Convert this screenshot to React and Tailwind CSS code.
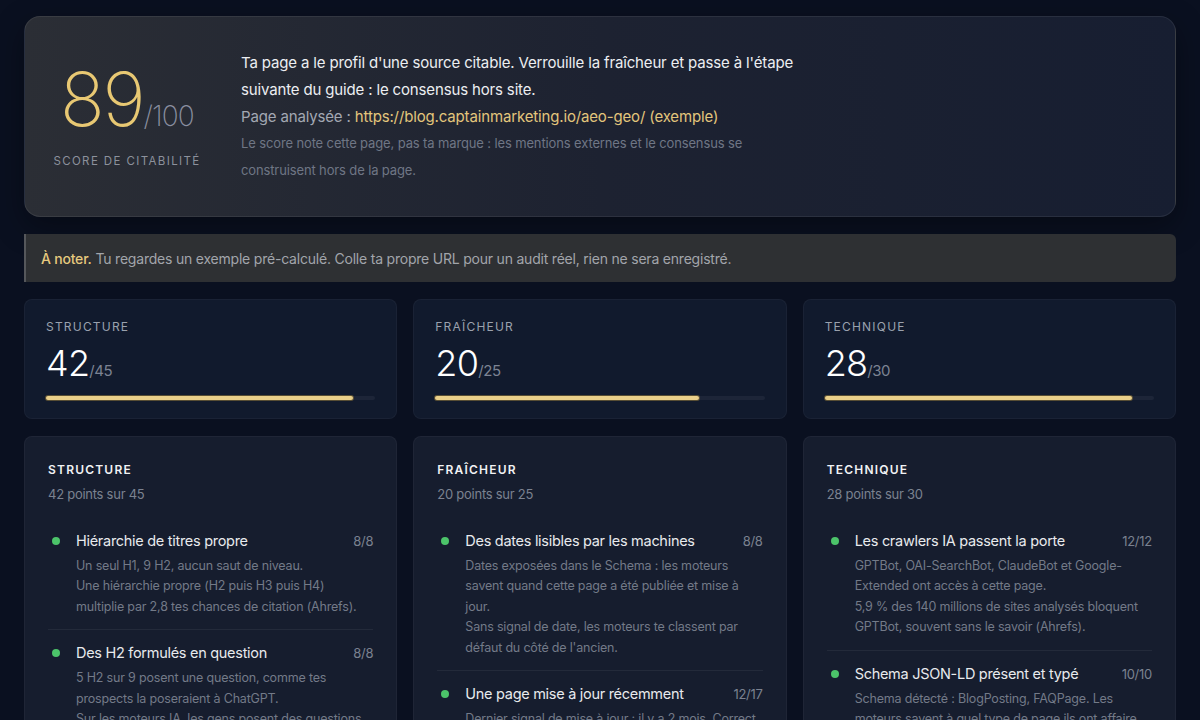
const stats = [
  { label: "STRUCTURE", score: 42, max: 45 },
  { label: "FRAÎCHEUR", score: 20, max: 25 },
  { label: "TECHNIQUE", score: 28, max: 30 },
];

const details = [
  {
    title: "STRUCTURE",
    sub: "42 points sur 45",
    items: [
      {
        name: "Hiérarchie de titres propre",
        pts: "8/8",
        lines: [
          "Un seul H1, 9 H2, aucun saut de niveau.",
          "Une hiérarchie propre (H2 puis H3 puis H4) multiplie par 2,8 tes chances de citation (Ahrefs).",
        ],
      },
      {
        name: "Des H2 formulés en question",
        pts: "8/8",
        lines: [
          "5 H2 sur 9 posent une question, comme tes prospects la poseraient à ChatGPT.",
          "Sur les moteurs IA, les gens posent des questions complètes, pas des mots-clés.",
        ],
      },
    ],
  },
  {
    title: "FRAÎCHEUR",
    sub: "20 points sur 25",
    items: [
      {
        name: "Des dates lisibles par les machines",
        pts: "8/8",
        lines: [
          "Dates exposées dans le Schema : les moteurs savent quand cette page a été publiée et mise à jour.",
          "Sans signal de date, les moteurs te classent par défaut du côté de l'ancien.",
        ],
      },
      {
        name: "Une page mise à jour récemment",
        pts: "12/17",
        lines: [
          "Dernier signal de mise à jour : il y a 2 mois. Correct, mais un rafraîchissement trimestriel te garde dans la course.",
        ],
      },
    ],
  },
  {
    title: "TECHNIQUE",
    sub: "28 points sur 30",
    items: [
      {
        name: "Les crawlers IA passent la porte",
        pts: "12/12",
        lines: [
          "GPTBot, OAI-SearchBot, ClaudeBot et Google-Extended ont accès à cette page.",
          "5,9 % des 140 millions de sites analysés bloquent GPTBot, souvent sans le savoir (Ahrefs).",
        ],
      },
      {
        name: "Schema JSON-LD présent et typé",
        pts: "10/10",
        lines: [
          "Schema détecté : BlogPosting, FAQPage. Les moteurs savent à quel type de page ils ont affaire.",
        ],
      },
    ],
  },
];

function StatCard({ label, score, max }) {
  return (
    <div className="rounded-lg border border-white/[0.04] bg-[#111a2d] px-[21px] pt-[18px] pb-[18px]">
      <div className="text-[12px] tracking-[0.1em] text-[#9aa1ad]">{label}</div>
      <div className="mt-[9px] flex items-baseline">
        <span className="text-[36px] font-light leading-none tracking-[-0.02em] text-white">{score}</span>
        <span className="text-[15px] leading-none tracking-[-0.03em] text-[#7c8393]">/{max}</span>
      </div>
      <div className="mt-[15px] h-[4px] rounded-full bg-[#1d2538]">
        <div
          className="h-full rounded-full bg-[#ead08a] shadow-[0_0_0_1px_rgba(160,130,60,0.5)]"
          style={{ width: `${(score / max) * 100}%` }}
        />
      </div>
    </div>
  );
}

function DetailCard({ title, sub, items }) {
  return (
    <div className="rounded-lg border border-white/[0.04] bg-[#161d2e] px-[23px] pt-[24px] pb-4">
      <div className="text-[12px] font-semibold tracking-[0.1em] text-[#f1f2f4]">{title}</div>
      <div className="mt-[6px] text-[13px] tracking-[-0.02em] text-[#7b8290]">{sub}</div>
      <div className="mt-[13px]">
        {items.map((it, i) => (
          <div
            key={i}
            className={`flex gap-[16px] pl-1 py-3 ${i > 0 ? "border-t border-white/[0.06]" : ""}`}
          >
            <span className="mt-[7px] h-[8px] w-[8px] shrink-0 rounded-full bg-[#4cc46a]" />
            <div className="min-w-0 flex-1">
              <div className="flex items-baseline justify-between gap-2">
                <span className="text-[14.5px] leading-[22px] tracking-[-0.02em] text-[#e8eaed]">{it.name}</span>
                <span className="text-[13px] tracking-[-0.02em] text-[#7b8290]">{it.pts}</span>
              </div>
              <div className="mt-[4px] text-[12.5px] leading-[20.5px] tracking-[-0.015em] text-[#737a88]">
                {it.lines.map((l, j) => (
                  <p key={j}>{l}</p>
                ))}
              </div>
            </div>
          </div>
        ))}
      </div>
    </div>
  );
}

export default function App() {
  return (
    <div
      className="min-h-screen bg-[#0a1020] px-6 pt-4 pb-10"
      style={{ fontFamily: "Inter, 'Noto Sans', sans-serif" }}
    >
      <div className="flex items-center rounded-2xl border border-white/[0.07] bg-gradient-to-r from-[#2b2e35] via-[#1d2231] to-[#171e31] py-[32px] shadow-[0_10px_30px_rgba(0,0,0,0.35)]">
        <div className="flex w-[204px] shrink-0 flex-col items-center">
          <div className="flex items-baseline">
            <span className="text-[74px] font-extralight leading-none tracking-[-0.03em] text-[#e8c873]">89</span>
            <span className="text-[28px] font-extralight tracking-[-0.03em] text-[#8a8fa0]">/100</span>
          </div>
          <div className="mt-[16px] text-[11.5px] tracking-[0.12em] text-[#8c919c]">SCORE DE CITABILITÉ</div>
        </div>
        <div className="ml-[12px] max-w-[572px]">
          <p className="text-[15px] leading-[27px] tracking-[-0.01em] text-[#eceef1]">
            Ta page a le profil d'une source citable. Verrouille la fraîcheur et passe à l'étape suivante du guide : le consensus hors site.
          </p>
          <p className="text-[15px] leading-[27px] tracking-[-0.01em] text-[#a3a8b3]">
            Page analysée : <span className="text-[#e3c67c]">https://blog.captainmarketing.io/aeo-geo/ (exemple)</span>
          </p>
          <p className="max-w-[520px] text-[13px] leading-[27px] tracking-[-0.01em] text-[#6f7685]">
            Le score note cette page, pas ta marque : les mentions externes et le consensus se construisent hors de la page.
          </p>
        </div>
      </div>

      <div className="mt-[17px] flex h-[48px] items-center rounded-r-md border-l-2 border-[#55575b] bg-[#2e3033] pl-[15px] text-[14px] tracking-[-0.015em] text-[#a2a5ab]">
        <span className="mr-1 font-medium text-[#e6c97e]">À noter.</span>
        Tu regardes un exemple pré-calculé. Colle ta propre URL pour un audit réel, rien ne sera enregistré.
      </div>

      <div className="mt-[17px] grid grid-cols-3 gap-4">
        {stats.map((s) => (
          <StatCard key={s.label} {...s} />
        ))}
      </div>

      <div className="mt-[17px] grid grid-cols-3 items-start gap-4">
        {details.map((d) => (
          <DetailCard key={d.title} {...d} />
        ))}
      </div>
    </div>
  );
}
